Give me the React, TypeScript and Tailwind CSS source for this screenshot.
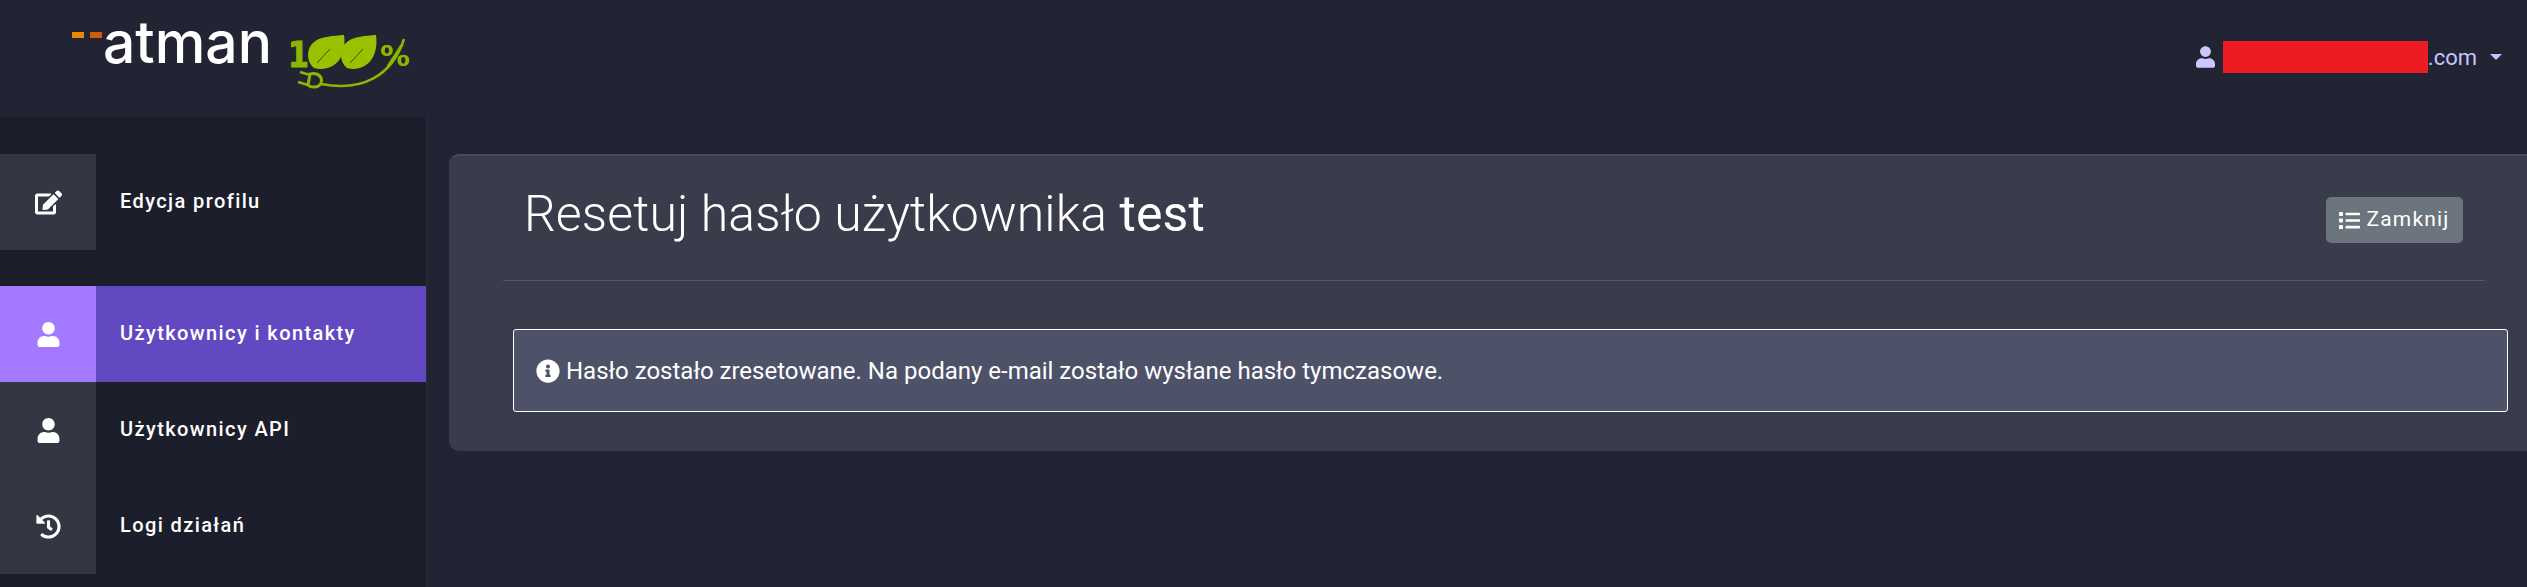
import React from "react";
import { FaEdit, FaUser, FaHistory, FaList, FaInfoCircle } from "react-icons/fa";

const roboto = "font-['Roboto',_sans-serif]";

function Logo() {
  return (
    <svg width="350" height="100" viewBox="70 0 350 100" className="block">
      <rect x="72" y="32" width="12" height="6" fill="#e88a00" />
      <rect x="90" y="32" width="12" height="6" fill="#cf5a10" />
      <text x="103" y="63" fontFamily="Inter, sans-serif" fontSize="58" fontWeight="500" fill="#ffffff" textLength="169" lengthAdjust="spacingAndGlyphs">atman</text>
      <text x="288" y="67" fontFamily="'DejaVu Sans', sans-serif" fontSize="36" fontWeight="700" fill="#8db600" stroke="#8db600" strokeWidth="1" textLength="21" lengthAdjust="spacingAndGlyphs">1</text>
      <path d="M314 68 C306 62 306 48 314 42 C321 36 334 36 344 35 C346 48 342 60 334 65 C328 69 320 70 314 68 Z" fill="#99c100" />
      <path d="M347 68 C339 62 339 48 347 42 C354 36 366 36 376 35 C378 48 374 60 366 65 C360 69 353 70 347 68 Z" fill="#99c100" />
      <path d="M317 63 L330 49 M350 63 L363 49" stroke="#3d5010" strokeWidth="1" fill="none" />
      <text x="380" y="66" fontFamily="'DejaVu Sans', sans-serif" fontSize="29" fontWeight="700" fill="#8db600" textLength="30" lengthAdjust="spacingAndGlyphs">%</text>
      <path d="M321 84 C362 92 392 76 404 39" stroke="#8db600" strokeWidth="2.5" fill="none" />
      <path d="M300 72 L310 75 M298 82 L308 85" stroke="#8db600" strokeWidth="2.5" fill="none" />
      <path d="M310 74 C318 72 323 77 321 83 C319 88 311 88 308 85 Z" stroke="#8db600" strokeWidth="3" fill="none" />
    </svg>
  );
}

function Item({ icon, label, active, mb }: { icon: React.ReactNode; label: string; active?: boolean; mb?: boolean }) {
  return (
    <div className={`flex h-[96px] items-center ${active ? "bg-[#6349c1]" : ""} ${mb ? "mb-[36px]" : ""}`}>
      <div className={`flex h-full w-[96px] items-center justify-center text-white ${active ? "bg-[#a37aff]" : "bg-[#343643]"}`}>
        {icon}
      </div>
      <span className="ml-[24px] -translate-y-[1px] text-[20px] font-medium tracking-[1.4px] text-white">{label}</span>
    </div>
  );
}

export default function App() {
  return (
    <div className={`flex h-[587px] w-[2527px] flex-col overflow-hidden bg-[#222433] ${roboto}`}>
      <header className="flex h-[117px] shrink-0 items-start justify-between">
        <div className="ml-[70px]">
          <Logo />
        </div>
        <div className="mr-[25px] mt-[41px] flex h-[32px] items-center text-[22px] text-[#c9c3fb]">
          <FaUser className="mr-[8px] h-[22px] w-[19px] text-[#cfc6ff]" />
          <div className="h-[32px] w-[205px] bg-[#ed1c24]" />
          <span>.com</span>
          <div className="ml-[13px] h-0 w-0 border-x-[6px] border-t-[6px] border-x-transparent border-t-[#c9c3fb]" />
        </div>
      </header>
      <div className="flex min-h-0 flex-1">
        <aside className="w-[427px] shrink-0 border-r border-[#2c2e3a] bg-[#1c1e2b] pt-[37px]">
          <Item icon={<FaEdit className="text-[27px]" />} label="Edycja profilu" mb />
          <Item icon={<FaUser className="text-[25px]" />} label="Użytkownicy i kontakty" active />
          <Item icon={<FaUser className="text-[25px]" />} label="Użytkownicy API" />
          <Item icon={<FaHistory className="text-[25px]" />} label="Logi działań" />
        </aside>
        <main className="min-w-0 flex-1 pl-[22px] pt-[37px]">
          <section className="h-[297px] rounded-l-[10px] border-t-2 border-[#4b4c5a] bg-[#3a3b4b] text-white">
            <div className="ml-[54px] mr-[42px] flex h-[125px] items-start justify-between border-b border-[#55566b]">
              <h1 className="ml-[21px] mt-[26px] text-[50px] font-light leading-[64px] tracking-[0.1px]">
                Resetuj hasło użytkownika <span className="font-normal">test</span>
              </h1>
              <button className="mr-[22px] mt-[41px] flex h-[46px] w-[137px] items-center justify-center gap-[6px] rounded-[5px] bg-[#6c757d] text-[21px] tracking-[1.2px] text-white">
                <FaList className="text-[21px]" />
                Zamknij
              </button>
            </div>
            <div className="ml-[64px] mr-[19px] mt-[48px] flex h-[83px] items-center rounded-[3px] border border-white bg-[#4d5269] pl-[22px] text-[24px]">
              <FaInfoCircle className="mr-[6px] h-[24px] w-[24px]" />
              Hasło zostało zresetowane. Na podany e-mail zostało wysłane hasło tymczasowe.
            </div>
          </section>
        </main>
      </div>
    </div>
  );
}
